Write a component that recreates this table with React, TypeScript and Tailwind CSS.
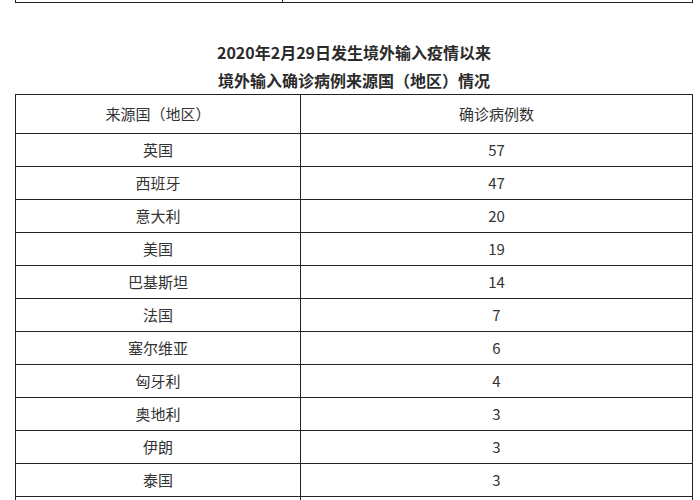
const rows: [string, string][] = [
  ["英国", "57"],
  ["西班牙", "47"],
  ["意大利", "20"],
  ["美国", "19"],
  ["巴基斯坦", "14"],
  ["法国", "7"],
  ["塞尔维亚", "6"],
  ["匈牙利", "4"],
  ["奥地利", "3"],
  ["伊朗", "3"],
  ["泰国", "3"],
];

export default function App() {
  return (
    <div
      className="w-[700px] h-[500px] overflow-hidden bg-white pl-[15px] text-[#333]"
      style={{ fontFamily: '"Noto Sans CJK SC", "Noto Sans", sans-serif' }}
    >
      {/* bottom edge of the previous table */}
      <div className="w-[678px] h-[3px] flex border-x border-b border-[#222]">
        <div className="w-[267px] border-r border-[#222]" />
      </div>

      <div className="w-[678px] mt-[35px] text-center font-bold text-[16px] leading-[28px] text-[#2b2b2b]">
        <div>2020年2月29日发生境外输入疫情以来</div>
        <div>境外输入确诊病例来源国（地区）情况</div>
      </div>

      <div className="w-[678px] border-t border-x border-[#222] text-[15px]">
        <div className="flex h-[39px] border-b border-[#222]">
          <div className="w-[285px] border-r border-[#222] flex items-center justify-center">
            来源国（地区）
          </div>
          <div className="flex-1 flex items-center justify-center">确诊病例数</div>
        </div>
        {rows.map(([name, n]) => (
          <div key={name} className="flex h-[33px] border-b border-[#222]">
            <div className="w-[285px] border-r border-[#222] flex items-center justify-center">
              {name}
            </div>
            <div className="flex-1 flex items-center justify-center">{n}</div>
          </div>
        ))}
        {/* next row, below the fold */}
        <div className="flex h-[33px]">
          <div className="w-[285px] border-r border-[#222]" />
          <div className="flex-1" />
        </div>
      </div>
    </div>
  );
}
